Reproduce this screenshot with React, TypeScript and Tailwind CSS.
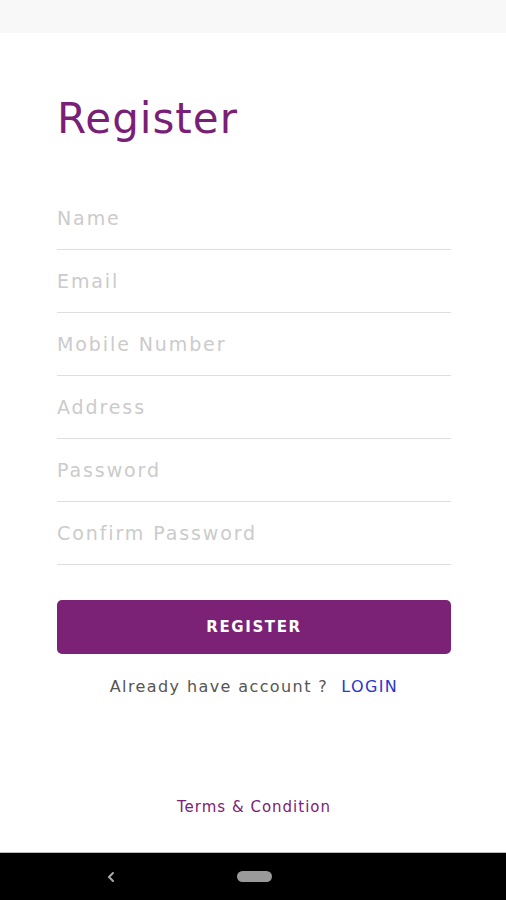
import React from "react";

const fields = ["Name", "Email", "Mobile Number", "Address", "Password", "Confirm Password"];

export default function App() {
  return (
    <div
      className="w-[506px] h-[900px] bg-white flex flex-col overflow-hidden"
      style={{ fontFamily: '"DejaVu Sans", "Open Sans", sans-serif' }}
    >
      {/* status bar */}
      <div className="h-[33px] bg-[#f8f8f8] shrink-0" />

      <div className="flex-1 flex flex-col pl-[57px] pr-[55px]">
        <h1 className="mt-[62px] text-[42px] leading-[48px] text-[#7a1f77] tracking-[1px]">Register</h1>

        <div className="mt-[44px] flex flex-col">
          {fields.map((f) => (
            <div key={f} className="h-[63px] border-b border-[#dedede] flex items-start">
              <input
                placeholder={f}
                className="w-full mt-[18px] h-[27px] text-[19px] tracking-[1.9px] text-[#444] placeholder:text-[#cbcbcb] outline-none bg-transparent"
              />
            </div>
          ))}
        </div>

        <button className="mt-[35px] h-[54px] w-full rounded-[5px] bg-[#7b2277] text-white text-[15px] font-semibold tracking-[1.6px]">
          REGISTER
        </button>

        <div className="mt-[21px] flex justify-center items-center text-[16px] tracking-[1.4px]">
          <span className="text-[#555]">Already have account ?</span>
          <span className="ml-[13px] text-[#2a36c8]">LOGIN</span>
        </div>

        <div className="flex-1" />
        <div className="mb-[34px] text-center text-[15px] tracking-[1px] text-[#7b2277]">Terms &amp; Condition</div>
      </div>

      {/* nav bar */}
      <div className="h-[48px] bg-black border-t border-[#bbb] shrink-0 flex items-center">
        <div className="w-[220px] flex justify-end pr-[104px]">
          <svg width="10" height="12" viewBox="0 0 10 12">
            <path d="M7 2 L3 6 L7 10" stroke="#aaa" strokeWidth="2" fill="none" strokeLinecap="round" />
          </svg>
        </div>
        <div className="ml-[17px] w-[35px] h-[11px] rounded-full bg-[#9a9a9a]" />
      </div>
    </div>
  );
}
